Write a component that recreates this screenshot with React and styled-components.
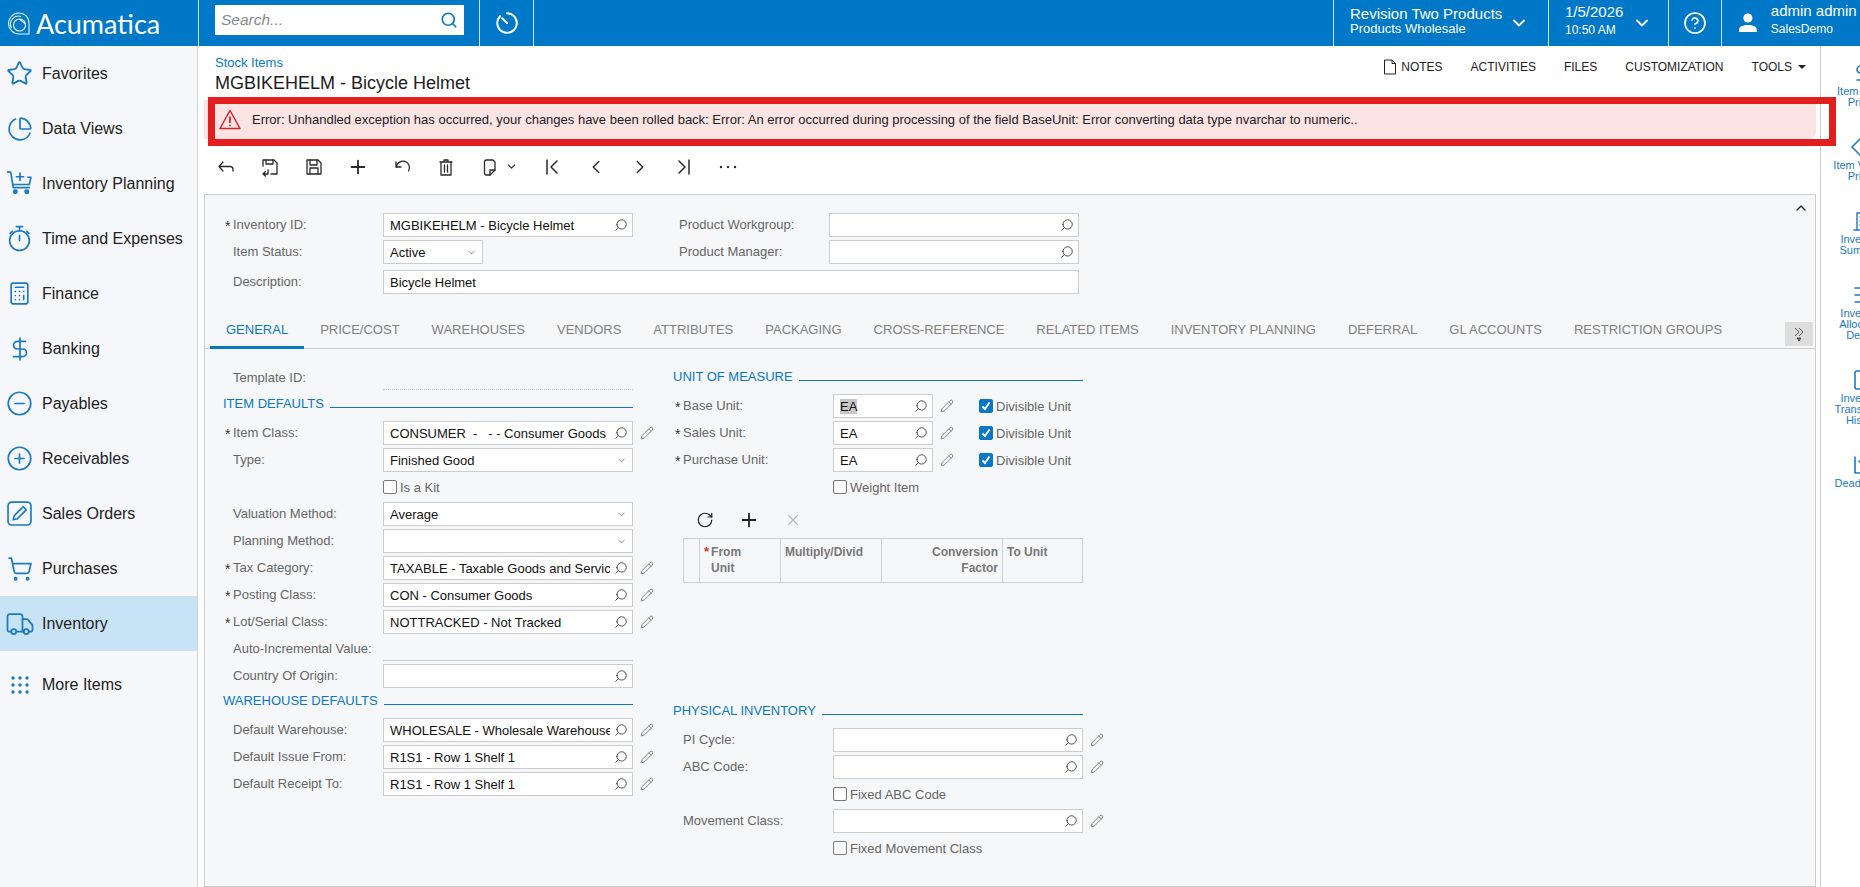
import React from 'react'
import styled, { createGlobalStyle } from 'styled-components'
import {
  Star as StarOutline, ChartPie, Calculator, DollarSign, CircleMinus, CirclePlus,
  ShoppingCart, Truck, Search, Pencil, ChevronDown, ChevronUp, CircleHelp,
  ChevronLeft, ChevronRight, Plus, X, RotateCw,
} from 'lucide-react'

const GlobalStyle = createGlobalStyle`
  html, body { margin: 0; padding: 0; }
  body { font-family: "Liberation Sans", Arial, sans-serif; font-size: 13px; color: #222; }
  * { box-sizing: border-box; }
`

const blue = '#0078c8'
const iconBlue = '#1a7ac2'

const App_ = styled.div`
  width: 100vw;
  height: 100vh;
  overflow: hidden;
  display: flex;
  flex-direction: column;
  background: #fff;
`
const TopBar = styled.header`
  height: 46px;
  flex: none;
  display: flex;
  background: ${blue};
  color: #fff;
`
const LogoBox = styled.div`
  width: 198px;
  display: flex;
  align-items: center;
  padding-left: 8px;
  gap: 6px;
`
const LogoText = styled.span`
  font-family: "Lato", sans-serif;
  font-size: 27px;
`
const SearchBox = styled.div`
  width: 282px;
  padding: 5px 15px 0 16px;
  border-left: 1px solid #cfe3f3;
  border-right: 1px solid #cfe3f3;
`
const SearchInput = styled.div`
  height: 30px;
  background: #fff;
  display: flex;
  align-items: center;
  justify-content: space-between;
  padding: 0 6px 0 6px;
  color: #8a8a8a;
  font-style: italic;
  font-size: 15.5px;
  svg { color: ${blue}; }
`
const TopCell = styled.div`
  width: ${(p) => p.$w}px;
  display: flex;
  align-items: center;
  justify-content: ${(p) => (p.$center ? 'center' : 'flex-start')};
  padding-left: ${(p) => p.$pl || 0}px;
  border-right: ${(p) => (p.$noBorder ? 'none' : '1px solid #cfe3f3')};
`
const Spacer = styled.div`
  flex: 1;
  border-right: 1px solid #cfe3f3;
`
const TopLines = styled.div`
  display: flex;
  flex-direction: column;
  width: ${(p) => p.$w}px;
  margin-left: ${(p) => p.$ml || 0}px;
  margin-bottom: ${(p) => p.$mb || 0}px;
  white-space: nowrap;
`
const TopMain = styled.span`
  font-size: 15px;
  line-height: 18px;
`
const TopSub = styled.span`
  font-size: ${(p) => p.$size || 13}px;
  line-height: ${(p) => p.$lh || 18}px;
`
const Body = styled.div`
  flex: 1;
  min-height: 0;
  display: flex;
`
const Sidebar = styled.nav`
  width: 198px;
  flex: none;
  background: #f5f7fa;
  border-right: 1px solid #ccd0d4;
`
const NavItem = styled.div`
  height: 55px;
  display: flex;
  align-items: center;
  font-size: 16px;
  color: #222;
  background: ${(p) => (p.$active ? '#c9e3f6' : 'transparent')};
  margin-top: ${(p) => p.$top || 0}px;
`
const NavIcon = styled.span`
  width: 42px;
  flex: none;
  display: flex;
  justify-content: center;
  padding-right: 3px;
  color: ${iconBlue};
`
const Content = styled.main`
  flex: 1;
  min-width: 0;
  display: flex;
  flex-direction: column;
`
const TitleRow = styled.div`
  height: 54px;
  flex: none;
  display: flex;
  justify-content: space-between;
  padding: 8px 14px 0 17px;
`
const Crumb = styled.div`
  font-size: 13px;
  line-height: 17px;
  color: #0a78c2;
`
const Title = styled.h1`
  margin: 0;
  font-size: 18px;
  font-weight: 400;
  line-height: 24px;
  color: #1c1c1c;
`
const Actions = styled.div`
  display: flex;
  gap: 28px;
  padding-top: 4px;
  height: 22px;
  align-items: center;
  font-size: 12px;
  color: #222;
`
const Action = styled.span`
  display: flex;
  align-items: center;
  gap: ${(p) => p.$gap || 0}px;
`
const Caret = styled.i`
  width: 0;
  height: 0;
  border-left: 4px solid transparent;
  border-right: 4px solid transparent;
  border-top: 4px solid #222;
`
const ErrorBar = styled.div`
  position: relative;
  height: 39px;
  flex: none;
  margin: 0 4px 0 6px;
  background: #fde4e4;
  border-radius: 0 0 8px 0;
  display: flex;
  align-items: center;
  padding: 0 0 0 15px;
  gap: 11px;
  font-size: 13px;
  color: #222;
`
const Marker = styled.div`
  position: absolute;
  left: 4px;
  top: -3px;
  right: -20px;
  bottom: -7px;
  border: 7px solid #e21e1e;
  z-index: 5;
`
const Toolbar = styled.div`
  height: 55px;
  flex: none;
  display: flex;
  align-items: center;
  padding-left: 6px;
  color: #2a2a2a;
`
const ToolButton = styled.span`
  width: ${(p) => p.$w || 44}px;
  height: 28px;
  display: flex;
  align-items: center;
  justify-content: center;
  gap: 5px;
  color: ${(p) => p.$color || 'inherit'};
`
const Panel = styled.section`
  position: relative;
  flex: 1;
  margin: 0 4px 0 6px;
  background: #f5f7f9;
  border: 1px solid #ccc;
  padding-top: 18px;
`
const Collapse = styled.span`
  position: absolute;
  top: 5px;
  right: 6px;
  color: #222;
`
const HeaderRows = styled.div`
  padding-left: 18px;
`
const Row = styled.div`
  display: flex;
  align-items: center;
  height: 24px;
  margin-bottom: 3px;
  margin-top: ${(p) => p.$top || 0}px;
`
const Pair = styled.div`
  display: flex;
  align-items: center;
  width: ${(p) => p.$w}px;
`
const Star = styled.span`
  width: 10px;
  flex: none;
  padding: 3px 0 0 2px;
  font-size: 14px;
  line-height: 15px;
  color: #333;
  height: 18px;
`
const Label = styled.span`
  width: 150px;
  flex: none;
  color: #666;
  font-size: 13px;
  margin-top: -2px;
`
const FieldBox = styled.div`
  width: ${(p) => p.$w}px;
  height: 24px;
  flex: none;
  background: #fff;
  border: 1px solid #ccc;
  display: flex;
  align-items: center;
  padding-left: 6px;
`
const FieldValue = styled.span`
  flex: 1;
  min-width: 0;
  overflow: hidden;
  white-space: pre;
  color: #111;
  font-size: 13px;
`
const Selected = styled.span`
  background: #c8c8c8;
`
const FieldIcon = styled.span`
  width: 22px;
  flex: none;
  display: flex;
  justify-content: center;
  color: #444;
`
const PencilIcon = styled.span`
  width: 14px;
  margin-left: 7px;
  display: flex;
  color: #555;
`
const Lined = styled.div`
  width: 250px;
  height: 24px;
  border-bottom: 1px ${(p) => (p.$dotted ? 'dotted #ccc' : 'solid #ccc')};
`
const CheckRow = styled.label`
  display: flex;
  align-items: center;
  gap: 3px;
  color: #666;
  font-size: 13px;
  margin-left: ${(p) => p.$ml || 0}px;
  white-space: nowrap;
`
const CheckBox = styled.span`
  width: 14px;
  height: 14px;
  flex: none;
  border-radius: 2px;
  display: flex;
  align-items: center;
  justify-content: center;
  background: ${(p) => (p.$on ? '#0b78c6' : '#fff')};
  border: 1px solid ${(p) => (p.$on ? '#0b78c6' : '#777')};
`
const Indent = styled.div`
  width: 160px;
  flex: none;
`
const TabBar = styled.div`
  display: flex;
  height: 30px;
  margin-top: 25px;
  padding-left: 5px;
  border-bottom: 1px solid #ccc;
`
const Tab = styled.div`
  height: 30px;
  padding: 0 16px;
  line-height: 21px;
  font-size: 13px;
  white-space: nowrap;
  color: ${(p) => (p.$active ? '#0a78c2' : '#808080')};
  border-bottom: 3px solid ${(p) => (p.$active ? '#0a78c2' : 'transparent')};
`
const TabMore = styled.span`
  margin-left: auto;
  margin-right: 2px;
  margin-top: 3px;
  width: 28px;
  height: 24px;
  background: #ddd;
  color: #555;
  display: flex;
  align-items: center;
  justify-content: center;
`
const Columns = styled.div`
  display: flex;
  padding: 17px 0 0 18px;
`
const Col = styled.div`
  width: ${(p) => p.$w}px;
  flex: none;
  padding-top: ${(p) => p.$pt || 0}px;
`
const Head = styled.div`
  display: flex;
  height: 24px;
  margin-bottom: 3px;
  margin-top: ${(p) => p.$top || 0}px;
  width: 410px;
  gap: 6px;
  line-height: 20px;
  font-size: 13px;
  color: #0a78c2;
  white-space: nowrap;
  &::after {
    content: '';
    flex: 1;
    height: 1px;
    margin-top: 13px;
    background: #0a78c2;
  }
`
const GridArea = styled.div`
  height: 199px;
`
const GridBar = styled.div`
  height: 36px;
  display: flex;
  align-items: center;
  padding-left: 10px;
`
const Grid = styled.div`
  width: 400px;
  margin-left: 10px;
  height: 45px;
  display: grid;
  grid-template-columns: 16px 81px 101px 121px 1fr;
  border: 1px solid #d0d0d0;
`
const GridCell = styled.div`
  padding: 5px 4px 0;
  font-size: 12px;
  line-height: 16px;
  font-weight: 700;
  color: #777;
  overflow: hidden;
  text-align: ${(p) => (p.$right ? 'right' : 'left')};
  border-right: ${(p) => (p.$last ? 'none' : '1px solid #d0d0d0')};
`
const FromCell = styled(GridCell)`
  display: flex;
  gap: 2px;
  b { color: #d9302c; font-size: 13px; }
`
const Rail = styled.aside`
  width: 40px;
  flex: none;
  background: #fff;
  border-left: 1px solid #ccc;
  overflow: hidden;
  padding-top: 15px;
`
const RailItem = styled.div`
  width: 84px;
  padding-bottom: 27px;
  display: flex;
  flex-direction: column;
  align-items: center;
  text-align: center;
  font-size: 11px;
  line-height: 11px;
  color: #1a7ac2;
`
const RailLabel = styled.span`
  margin-top: 1px;
`
const FlipSearch = styled(Search)`
  transform: scaleX(-1);
`

function Field({ w = 250, value, type = 'search', pencil, selected }) {
  return (
    <>
      <FieldBox $w={w}>
        <FieldValue>{selected ? <Selected>{value}</Selected> : value}</FieldValue>
        {type === 'search' && <FieldIcon><FlipSearch size={14} strokeWidth={1.6} /></FieldIcon>}
        {type === 'select' && <FieldIcon><ChevronDown size={11} strokeWidth={1.3} /></FieldIcon>}
      </FieldBox>
      {pencil && <PencilIcon><Pencil size={14} strokeWidth={1.2} /></PencilIcon>}
    </>
  )
}

function FormRow({ label, req, w, value, type, pencil, selected, children, top }) {
  return (
    <Row $top={top}>
      <Star>{req ? '*' : ''}</Star>
      <Label>{label}</Label>
      <Field w={w} value={value} type={type} pencil={pencil} selected={selected} />
      {children}
    </Row>
  )
}

function Check({ on, text, ml }) {
  return (
    <CheckRow $ml={ml}>
      <CheckBox $on={on}>
        {on && (
          <svg width="10" height="10" viewBox="0 0 10 10" fill="none" stroke="#fff" strokeWidth="2">
            <path d="M1.5 5.5 L4 8 L8.5 1.5" />
          </svg>
        )}
      </CheckBox>
      {text}
    </CheckRow>
  )
}

function CheckOnly({ text }) {
  return (
    <Row>
      <Indent />
      <Check text={text} />
    </Row>
  )
}

function Svg({ size = 20, box = 20, children, sw = 1.3 }) {
  return (
    <svg width={size} height={size} viewBox={`0 0 ${box} ${box}`} fill="none" stroke="currentColor" strokeWidth={sw} strokeLinecap="round" strokeLinejoin="round">
      {children}
    </svg>
  )
}

const Logo = () => (
  <svg width="22" height="23" viewBox="0 0 22 23" fill="none" stroke="#fff" strokeWidth="1.1">
    <path d="M11 1 A10 10 0 0 1 21 11 V22 H11 A10 10 0 0 1 11 1 Z" opacity="0.9" />
    <circle cx="11.5" cy="13" r="6" opacity="0.9" />
    <path d="M3.5 16 A8 8 0 0 1 13 4.5 M11.5 7 L17.5 12" opacity="0.9" />
  </svg>
)

const ClockIcon = () => (
  <Svg size={26} box={24} sw={1.9}>
    <path d="M12 3 a9 9 0 1 1 -6.4 2.7" />
    <path d="M7.6 7.6 L12 12" />
  </Svg>
)

const UserIcon = () => (
  <svg width="22" height="22" viewBox="0 0 22 22" fill="#fff">
    <circle cx="11" cy="6" r="4.6" />
    <path d="M2 20 v-2.5 c0-3 4-4.5 9-4.5 s9 1.5 9 4.5 V20 z" />
  </svg>
)

const CartPlus = () => (
  <Svg size={27} box={26} sw={1.6}>
    <path d="M1.5 2 H4.5 L7 17 H22.5" />
    <path d="M21 7 H24 L22.5 14 H6.4" />
    <path d="M13.5 3 V10 M10 6.5 H17" />
    <circle cx="9" cy="21" r="1.6" fill="currentColor" />
    <circle cx="20" cy="21" r="1.6" fill="currentColor" />
  </Svg>
)

const Stopwatch = () => (
  <Svg size={27} box={26} sw={1.6}>
    <circle cx="13" cy="15" r="9.5" />
    <path d="M13 1.5 V5.5 M10 1.5 H16 M13 10 V15 M20 6 L22 8 M6 6 L4 8" />
  </Svg>
)

const EditBox = () => (
  <Svg size={25} box={24} sw={1.6}>
    <rect x="1" y="1" width="22" height="22" rx="3.5" />
    <path d="M6 18 L7 14 L15.5 5.5 L18.5 8.5 L10 17 Z" />
  </Svg>
)

const Dots = () => (
  <svg width="20" height="20" viewBox="0 0 20 20" fill="currentColor">
    {[3, 10, 17].map((y) => [3, 10, 17].map((x) => <circle key={`${x}-${y}`} cx={x} cy={y} r="1.7" />))}
  </svg>
)

const NAV = [
  ['Favorites', <StarOutline size={27} strokeWidth={1.6} />],
  ['Data Views', <ChartPie size={26} strokeWidth={1.6} />],
  ['Inventory Planning', <CartPlus />],
  ['Time and Expenses', <Stopwatch />],
  ['Finance', <Calculator size={25} strokeWidth={1.6} />],
  ['Banking', <DollarSign size={26} strokeWidth={1.6} />],
  ['Payables', <CircleMinus size={27} strokeWidth={1.5} />],
  ['Receivables', <CirclePlus size={27} strokeWidth={1.5} />],
  ['Sales Orders', <EditBox />],
  ['Purchases', <ShoppingCart size={26} strokeWidth={1.6} />],
  ['Inventory', <Truck size={30} strokeWidth={1.4} />],
]

const BackIcon = () => <Svg><path d="M7 5 L3 9.5 L7 14 M3 9.5 H14 a3 3 0 0 1 3 3 V14" /></Svg>
const SaveCloseIcon = () => (
  <Svg>
    <path d="M3 9 V3 H14 L17 6 V17 H11" />
    <path d="M6 3 V7 H13 V3" />
    <path d="M8 17 H3.5 M5.5 14.5 L3 17 L5.5 19 M8 13 V17" />
  </Svg>
)
const SaveIcon = () => (
  <Svg>
    <path d="M3 3 H14 L17 6 V17 H3 Z" />
    <path d="M6 3 V8 H13 V3 M6 17 V11 H14 V17" />
  </Svg>
)
const UndoIcon = () => <Svg><path d="M4 5 V10 H9" /><path d="M4.5 10 A6.5 6.5 0 1 1 16.5 14" /></Svg>
const TrashIcon = () => (
  <Svg>
    <path d="M4 5 H16 M8 5 V3 H12 V5 M5 5 V18 H15 V5 M8.5 8 V15 M11.5 8 V15" />
  </Svg>
)
const PasteIcon = () => (
  <Svg>
    <path d="M6 3 H13 L15 5 V13 L10 18 H6 A2 2 0 0 1 4.5 16.5 V5 A2 2 0 0 1 6 3 Z" />
    <path d="M15 13 H10 V18" />
  </Svg>
)
const FirstIcon = () => <Svg sw={1.5}><path d="M5 3 V17 M15 4 L9 10 L15 16" /></Svg>
const LastIcon = () => <Svg sw={1.5}><path d="M15 3 V17 M5 4 L11 10 L5 16" /></Svg>

const TABS = ['GENERAL', 'PRICE/COST', 'WAREHOUSES', 'VENDORS', 'ATTRIBUTES', 'PACKAGING', 'CROSS-REFERENCE', 'RELATED ITEMS', 'INVENTORY PLANNING', 'DEFERRAL', 'GL ACCOUNTS', 'RESTRICTION GROUPS']

const RAIL = [
  [['Item Sales', 'Prices'], <DollarSign size={24} strokeWidth={1.5} />],
  [['Item Vendor', 'Prices'], <svg width="28" height="24" viewBox="0 0 28 24" fill="none" stroke="currentColor" strokeWidth="1.5"><path d="M14 1 L25 12 L14 23 L3 12 Z" /></svg>],
  [['Inventory', 'Summary'], <Svg size={24} box={24} sw={1.4}><path d="M6 21 V4 H18 V21 M3 21 H21 M9 8 H11 M13 8 H15 M9 12 H11 M13 12 H15 M9 16 H11 M13 16 H15" /></Svg>],
  [['Inventory', 'Allocation', 'Details'], <Svg size={24} box={24} sw={1.6}><path d="M4 5 H20 M4 12 H20 M4 19 H20" /></Svg>],
  [['Inventory', 'Transaction', 'History'], <Svg size={24} box={24} sw={1.6}><rect x="4" y="3" width="16" height="18" rx="2" /><path d="M12 11 V17 M12 7 V8" /></Svg>],
  [['Dead Stock'], <Svg size={24} box={24} sw={1.6}><path d="M4 4 V20 H20 M8 8 L12 12 L17 7" /></Svg>],
]

export default function App() {
  return (
    <App_>
      <GlobalStyle />
      <TopBar>
        <LogoBox>
          <Logo />
          <LogoText>Acumatica</LogoText>
        </LogoBox>
        <SearchBox>
          <SearchInput>
            Search...
            <Search size={18} strokeWidth={2.2} />
          </SearchInput>
        </SearchBox>
        <TopCell $w={54} $center><ClockIcon /></TopCell>
        <Spacer />
        <TopCell $w={215} $pl={16}>
          <TopLines $w={159} $mb={6}>
            <TopMain>Revision Two Products</TopMain>
            <TopSub $lh={12}>Products Wholesale</TopSub>
          </TopLines>
          <ChevronDown size={20} strokeWidth={2.2} />
        </TopCell>
        <TopCell $w={120} $pl={16}>
          <TopLines $w={67} $mb={5}>
            <TopMain>1/5/2026</TopMain>
            <TopSub $size={12}>10:50 AM</TopSub>
          </TopLines>
          <ChevronDown size={20} strokeWidth={2.2} />
        </TopCell>
        <TopCell $w={53} $center><CircleHelp size={24} strokeWidth={1.7} /></TopCell>
        <TopCell $w={138} $noBorder $pl={15}>
          <UserIcon />
          <TopLines $w={90} $ml={12} $mb={6}>
            <TopMain>admin admin</TopMain>
            <TopSub $size={12}>SalesDemo</TopSub>
          </TopLines>
        </TopCell>
      </TopBar>

      <Body>
        <Sidebar>
          {NAV.map(([name, icon]) => (
            <NavItem key={name} $active={name === 'Inventory'}>
              <NavIcon>{icon}</NavIcon>
              {name}
            </NavItem>
          ))}
          <NavItem $top={6}>
            <NavIcon><Dots /></NavIcon>
            More Items
          </NavItem>
        </Sidebar>

        <Content>
          <TitleRow>
            <div>
              <Crumb>Stock Items</Crumb>
              <Title>MGBIKEHELM - Bicycle Helmet</Title>
            </div>
            <Actions>
              <Action $gap={4}>
                <svg width="14" height="16" viewBox="0 0 14 16" fill="none" stroke="#222" strokeWidth="1">
                  <path d="M1.5 1 H9 L12.5 4.5 V15 H1.5 Z M9 1 V4.5 H12.5" />
                </svg>
                NOTES
              </Action>
              <Action>ACTIVITIES</Action>
              <Action>FILES</Action>
              <Action>CUSTOMIZATION</Action>
              <Action $gap={6}>TOOLS <Caret /></Action>
            </Actions>
          </TitleRow>

          <ErrorBar>
            <svg width="22" height="21" viewBox="0 0 22 21" fill="none" stroke="#d8232a" strokeWidth="1.5" strokeLinejoin="round">
              <path d="M11 1.5 L21 19.5 H1 Z" />
              <path d="M11 7.5 V14 M11 15.8 V17.2" strokeWidth="1.8" />
            </svg>
            Error: Unhandled exception has occurred, your changes have been rolled back: Error: An error occurred during processing of the field BaseUnit: Error converting data type nvarchar to numeric..
            <Marker />
          </ErrorBar>

          <Toolbar>
            <ToolButton><BackIcon /></ToolButton>
            <ToolButton><SaveCloseIcon /></ToolButton>
            <ToolButton><SaveIcon /></ToolButton>
            <ToolButton><Plus size={22} strokeWidth={2} /></ToolButton>
            <ToolButton><UndoIcon /></ToolButton>
            <ToolButton><TrashIcon /></ToolButton>
            <ToolButton $w={62}><PasteIcon /><ChevronDown size={13} /></ToolButton>
            <ToolButton><FirstIcon /></ToolButton>
            <ToolButton><ChevronLeft size={22} strokeWidth={1.6} /></ToolButton>
            <ToolButton><ChevronRight size={22} strokeWidth={1.6} /></ToolButton>
            <ToolButton><LastIcon /></ToolButton>
            <ToolButton>
              <svg width="20" height="4" viewBox="0 0 20 4" fill="currentColor">
                <circle cx="3" cy="2" r="1.2" /><circle cx="10" cy="2" r="1.2" /><circle cx="17" cy="2" r="1.2" />
              </svg>
            </ToolButton>
          </Toolbar>

          <Panel>
            <Collapse><ChevronUp size={16} strokeWidth={2} /></Collapse>
            <HeaderRows>
              <Row>
                <Pair $w={446}>
                  <Star>*</Star><Label>Inventory ID:</Label>
                  <Field value="MGBIKEHELM - Bicycle Helmet" />
                </Pair>
                <Pair $w={410}>
                  <Star /><Label>Product Workgroup:</Label>
                  <Field value="" />
                </Pair>
              </Row>
              <Row>
                <Pair $w={446}>
                  <Star /><Label>Item Status:</Label>
                  <Field w={100} value="Active" type="select" />
                </Pair>
                <Pair $w={410}>
                  <Star /><Label>Product Manager:</Label>
                  <Field value="" />
                </Pair>
              </Row>
              <FormRow top={6} label="Description:" w={696} value="Bicycle Helmet" type="none" />
            </HeaderRows>

            <TabBar>
              {TABS.map((t, i) => <Tab key={t} $active={i === 0}>{t}</Tab>)}
              <TabMore>
                <svg width="14" height="16" viewBox="0 0 14 16" fill="none" stroke="currentColor" strokeWidth="1">
                  <path d="M3 2 L7 6 L3 10 M7 2 L11 6 L7 10" />
                  <path d="M5 12 H9 L7 15 Z" fill="currentColor" />
                </svg>
              </TabMore>
            </TabBar>

            <Columns>
              <Col $w={450}>
                <Row>
                  <Star /><Label>Template ID:</Label><Lined $dotted />
                </Row>
                <Head $top={4}>ITEM DEFAULTS</Head>
                <FormRow req label="Item Class:" value="CONSUMER  -   - - Consumer Goods" pencil />
                <FormRow label="Type:" value="Finished Good" type="select" />
                <CheckOnly text="Is a Kit" />
                <FormRow label="Valuation Method:" value="Average" type="select" />
                <FormRow label="Planning Method:" value="" type="select" />
                <FormRow req label="Tax Category:" value="TAXABLE - Taxable Goods and Services" pencil />
                <FormRow req label="Posting Class:" value="CON - Consumer Goods" pencil />
                <FormRow req label="Lot/Serial Class:" value="NOTTRACKED - Not Tracked" pencil />
                <Row>
                  <Star /><Label>Auto-Incremental Value:</Label><Lined />
                </Row>
                <FormRow label="Country Of Origin:" value="" />
                <Head>WAREHOUSE DEFAULTS</Head>
                <FormRow label="Default Warehouse:" value="WHOLESALE - Wholesale Warehouse" pencil />
                <FormRow label="Default Issue From:" value="R1S1 - Row 1 Shelf 1" pencil />
                <FormRow label="Default Receipt To:" value="R1S1 - Row 1 Shelf 1" pencil />
              </Col>

              <Col $w={480} $pt={1}>
                <Head>UNIT OF MEASURE</Head>
                <FormRow req label="Base Unit:" w={100} value="EA" pencil selected>
                  <Check on text="Divisible Unit" ml={25} />
                </FormRow>
                <FormRow req label="Sales Unit:" w={100} value="EA" pencil>
                  <Check on text="Divisible Unit" ml={25} />
                </FormRow>
                <FormRow req label="Purchase Unit:" w={100} value="EA" pencil>
                  <Check on text="Divisible Unit" ml={25} />
                </FormRow>
                <CheckOnly text="Weight Item" />
                <GridArea>
                  <GridBar>
                    <ToolButton><RotateCw size={18} strokeWidth={1.6} /></ToolButton>
                    <ToolButton><Plus size={22} strokeWidth={2} /></ToolButton>
                    <ToolButton $color="#bbb"><X size={18} strokeWidth={1.6} /></ToolButton>
                  </GridBar>
                  <Grid>
                    <GridCell />
                    <FromCell><b>*</b><span>From<br />Unit</span></FromCell>
                    <GridCell>Multiply/Divid</GridCell>
                    <GridCell $right>Conversion<br />Factor</GridCell>
                    <GridCell $last>To Unit</GridCell>
                  </Grid>
                </GridArea>
                <Head>PHYSICAL INVENTORY</Head>
                <FormRow label="PI Cycle:" value="" pencil />
                <FormRow label="ABC Code:" value="" pencil />
                <CheckOnly text="Fixed ABC Code" />
                <FormRow label="Movement Class:" value="" pencil />
                <CheckOnly text="Fixed Movement Class" />
              </Col>
            </Columns>
          </Panel>
        </Content>

        <Rail>
          {RAIL.map(([lines, icon]) => (
            <RailItem key={lines.join(' ')}>
              {icon}
              <RailLabel>
                {lines.map((l) => <div key={l}>{l}</div>)}
              </RailLabel>
            </RailItem>
          ))}
        </Rail>
      </Body>
    </App_>
  )
}
